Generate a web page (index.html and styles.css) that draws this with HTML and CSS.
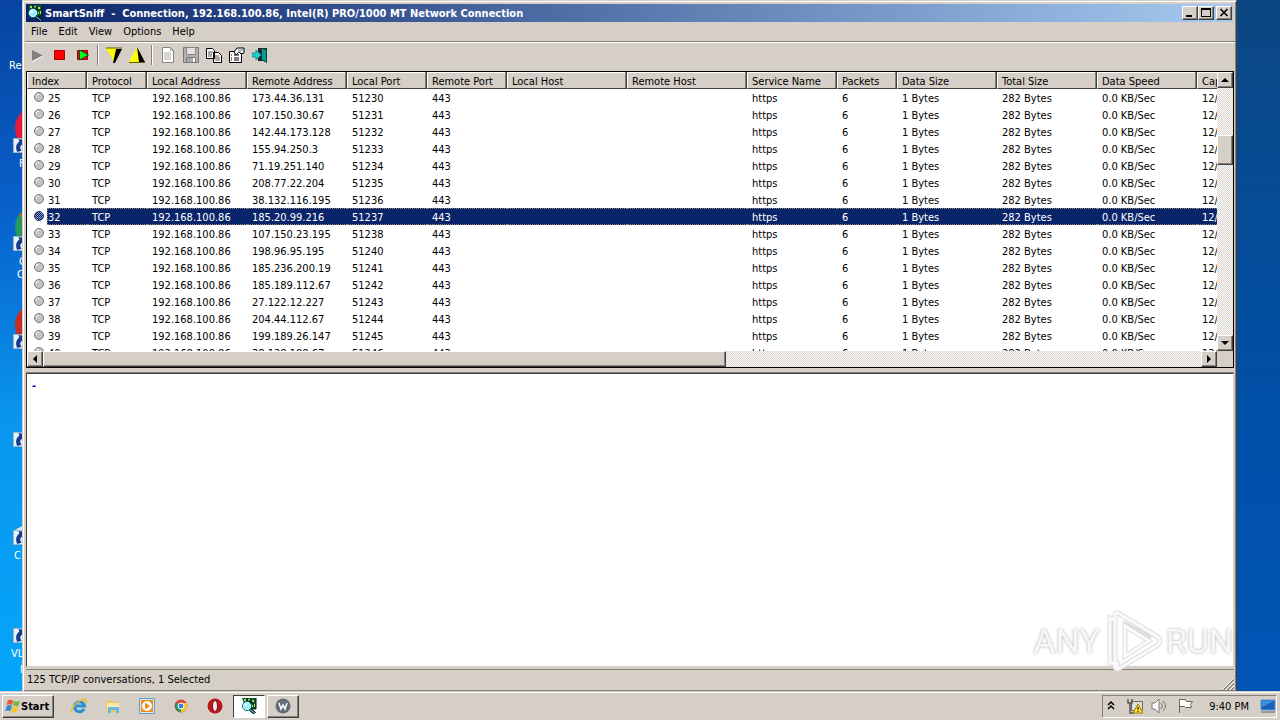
FILE: index.html
```
<!DOCTYPE html>
<html lang="en">
<head>
<meta charset="utf-8">
<title>SmartSniff</title>
<link rel="stylesheet" href="styles.css">
</head>
<body>
<svg width="0" height="0" class="defs" aria-hidden="true">
  <defs>
    <symbol id="sniff" viewBox="0 0 16 16">
      <path d="M1 0h14v11H5z" fill="#12552a"/><path d="M3 1h2v2H3zM7 1h2v2H7zM11 2h2v2h-2zM13 6h1v3h-1zM11 7h1v2h-1z" fill="#a6e36a"/><path d="M6 0v3h3v2h3M15 0v11h-4M10 1v4" fill="none" stroke="#001a08"/>
      <circle cx="6" cy="8" r="4.500" fill="#8ceefa" stroke="#0a5a66"/><circle cx="6" cy="8" r="3.500" fill="none" stroke="#d8ffff"/><path d="M4 6h2v2H4z" fill="#fff"/><path d="M9 11.500l5 4" stroke="#001a22" stroke-width="3"/><path d="M9 11.500l5 4" stroke="#7fe6f0"/>
    </symbol>
    <symbol id="shortcut" viewBox="0 0 14 14"><path d="M.5.5h13v13H.5z" fill="#e9f4fb" stroke="#9db5c4"/><path d="M12 2L5 1l1 2Q1 7 4 13l4-1Q5 8 9 6l1 3z" fill="#173a91"/></symbol>
    <symbol id="dot" viewBox="0 0 12 12"><circle cx="6" cy="6" r="4.500" fill="#c3c3c3" stroke="#777"/><path d="M3 6q0-3 3-3" fill="none" stroke="#f2f2f2"/></symbol>
    <pattern id="mesh" width="2" height="2" patternUnits="userSpaceOnUse"><path d="M0 0h2v2H0z" fill="#8d9bc0"/><path d="M0 0h1v1H0zM1 1h1v1H1z" fill="#0a246a"/></pattern>
    <symbol id="dot-sel" viewBox="0 0 12 12"><circle cx="6" cy="6" r="4.500" fill="url(#mesh)" stroke="#26397a"/></symbol>
  </defs>
</svg>

<main class="desktop">
  <div class="shortcuts">
    <span class="label recycle">Re</span>
    <svg class="pic firefox"><circle cx="22" cy="22" r="22" fill="#e8173c"/></svg><span class="label l2">F</span>
    <svg class="pic chrome"><circle cx="22" cy="22" r="22" fill="#25995b"/><path d="M4 10L22 0v22z" fill="#e34a2f"/></svg><span class="label l3">G</span><span class="label l4">C</span>
    <svg class="pic opera"><circle cx="22" cy="22" r="22" fill="#c72c27"/></svg>
    <svg class="pic paper"><path d="M0 8L14 0v10H0z" fill="#dce7ed"/></svg>
    <span class="label l5">C</span><span class="label l6">VL</span><span class="label l7">p</span>
    <svg class="arrow a1"><use href="#shortcut"/></svg><svg class="arrow a2"><use href="#shortcut"/></svg><svg class="arrow a3"><use href="#shortcut"/></svg><svg class="arrow a4"><use href="#shortcut"/></svg><svg class="arrow a5"><use href="#shortcut"/></svg><svg class="arrow a6"><use href="#shortcut"/></svg>
  </div>

  <section class="window">
    <header class="titlebar">
      <svg class="icon16"><use href="#sniff"/></svg>
      <h1>SmartSniff&nbsp; -&nbsp; Connection, 192.168.100.86, Intel(R) PRO/1000 MT Network Connection</h1>
      <div class="controls">
        <button class="raised" aria-label="Minimize"><svg viewBox="0 0 10 10"><path d="M1 7h6v2H1z"/></svg></button>
        <button class="raised" aria-label="Maximize"><svg viewBox="0 0 10 10"><path d="M0 0h10v9H0zM1 2v6h8V2z" fill-rule="evenodd"/></svg></button>
        <button class="raised close" aria-label="Close"><svg viewBox="0 0 10 10"><path d="M1.500 1l7 7M8.500 1l-7 7" stroke="#000" stroke-width="1.600"/></svg></button>
      </div>
    </header>
    <nav class="menu">
      <button>File</button><button>Edit</button><button>View</button><button>Options</button><button>Help</button>
    </nav>
    <div class="toolbar">
      <button aria-label="Start capture"><svg viewBox="0 0 16 16"><path d="M3 3l11 5.500L3 14z" fill="#808080"/><path d="M3 14.500L14 9" stroke="#fff"/></svg></button>
      <button aria-label="Stop capture"><svg viewBox="0 0 16 16"><path d="M2.500 3.500h10v9h-10z" fill="#f00" stroke="#a00"/></svg></button>
      <button aria-label="Restart capture"><svg viewBox="0 0 16 16"><path d="M2.500 3.500h10v9h-10z" fill="#f00" stroke="#900"/><path d="M4.500 3l9 5-9 5z" fill="#0f2" stroke="#052"/></svg></button>
      <i class="sep"></i>
      <button aria-label="Capture filter"><svg viewBox="0 0 16 16"><path d="M0 1h12L8 16 6 11z" fill="#ff0"/><path d="M10 2h6L9 16H7z"/><path d="M0 1h16" stroke="#665f00"/></svg></button>
      <button aria-label="Display filter"><svg viewBox="0 0 16 16"><path d="M8 0L0 15h12z" fill="#ff0"/><path d="M8 0l2 15h6z"/><path d="M0 15.500h16" stroke="#665f00"/></svg></button>
      <i class="sep"></i>
      <button aria-label="New"><svg viewBox="0 0 16 16"><path d="M2.500.5h8l3 3v12h-11z" fill="#fff" stroke="#858585"/><path d="M10.500.5v3h3M4 6h7M4 8h7M4 10h7M4 12h7" fill="none" stroke="#aaa"/></svg></button>
      <button aria-label="Save"><svg viewBox="0 0 16 16"><path d="M.5.5h15v15H.5z" fill="#b5b2ad" stroke="#777"/><path d="M3.500.5h9v7h-9z" fill="#e4e2df" stroke="#888"/><path d="M3.500 10.500h9v5h-9z" fill="#aaa" stroke="#777"/><path d="M10 11h2v4h-2z" fill="#fff"/></svg></button>
      <button aria-label="Copy"><svg viewBox="0 0 16 16"><path d="M.5 1.500h6l2 2v8h-8zM7.500 5.500h5l3 3v7h-8z" fill="#fff" stroke="#000"/><path d="M2 5h5M2 7h4M2 9h4M9 9h4M9 11h5M9 13h5" stroke="#555"/></svg></button>
      <button aria-label="Properties"><svg viewBox="0 0 16 16"><path d="M.5 4.500h12v11H.5z" fill="#fff" stroke="#000"/><path d="M2 8h1M5 8h5M2 11h1M5 11h5M2 13h1M5 13h5" stroke="#000"/><path d="M5 5l3-4h7v5l-3 1-2-2-3 3z" fill="#fff" stroke="#000"/><path d="M9 3h5M9 5h3" stroke="#777"/></svg></button>
      <button aria-label="Exit"><svg viewBox="0 0 16 16"><path d="M6 1h9v13H6z" fill="#222"/><path d="M9.500 1.500l5 1v13l-5-3z" fill="#149696" stroke="#044"/><path d="M0 6h4V3l5 5-5 5v-3H0z" fill="#19d0d0" stroke="#278b90"/></svg></button>
    </div>

    <section class="list">
      <div class="rows">
        <table>
          <colgroup><col class="w60"><col class="w60"><col class="w100"><col class="w100"><col class="w80"><col class="w80"><col class="w120"><col class="w120"><col class="w90"><col class="w60"><col class="w100"><col class="w100"><col class="w100"><col class="w100"></colgroup>
          <thead><tr><th>Index</th><th>Protocol</th><th>Local Address</th><th>Remote Address</th><th>Local Port</th><th>Remote Port</th><th>Local Host</th><th>Remote Host</th><th>Service Name</th><th>Packets</th><th>Data Size</th><th>Total Size</th><th>Data Speed</th><th>Cap</th></tr></thead>
          <tbody>
            <tr><td><svg><use href="#dot"/></svg><span>25</span></td><td>TCP</td><td>192.168.100.86</td><td>173.44.36.131</td><td>51230</td><td>443</td><td></td><td></td><td>https</td><td>6</td><td>1 Bytes</td><td>282 Bytes</td><td>0.0 KB/Sec</td><td>12/</td></tr>
            <tr><td><svg><use href="#dot"/></svg><span>26</span></td><td>TCP</td><td>192.168.100.86</td><td>107.150.30.67</td><td>51231</td><td>443</td><td></td><td></td><td>https</td><td>6</td><td>1 Bytes</td><td>282 Bytes</td><td>0.0 KB/Sec</td><td>12/</td></tr>
            <tr><td><svg><use href="#dot"/></svg><span>27</span></td><td>TCP</td><td>192.168.100.86</td><td>142.44.173.128</td><td>51232</td><td>443</td><td></td><td></td><td>https</td><td>6</td><td>1 Bytes</td><td>282 Bytes</td><td>0.0 KB/Sec</td><td>12/</td></tr>
            <tr><td><svg><use href="#dot"/></svg><span>28</span></td><td>TCP</td><td>192.168.100.86</td><td>155.94.250.3</td><td>51233</td><td>443</td><td></td><td></td><td>https</td><td>6</td><td>1 Bytes</td><td>282 Bytes</td><td>0.0 KB/Sec</td><td>12/</td></tr>
            <tr><td><svg><use href="#dot"/></svg><span>29</span></td><td>TCP</td><td>192.168.100.86</td><td>71.19.251.140</td><td>51234</td><td>443</td><td></td><td></td><td>https</td><td>6</td><td>1 Bytes</td><td>282 Bytes</td><td>0.0 KB/Sec</td><td>12/</td></tr>
            <tr><td><svg><use href="#dot"/></svg><span>30</span></td><td>TCP</td><td>192.168.100.86</td><td>208.77.22.204</td><td>51235</td><td>443</td><td></td><td></td><td>https</td><td>6</td><td>1 Bytes</td><td>282 Bytes</td><td>0.0 KB/Sec</td><td>12/</td></tr>
            <tr><td><svg><use href="#dot"/></svg><span>31</span></td><td>TCP</td><td>192.168.100.86</td><td>38.132.116.195</td><td>51236</td><td>443</td><td></td><td></td><td>https</td><td>6</td><td>1 Bytes</td><td>282 Bytes</td><td>0.0 KB/Sec</td><td>12/</td></tr>
            <tr class="selected"><td><svg><use href="#dot-sel"/></svg><span>32</span></td><td>TCP</td><td>192.168.100.86</td><td>185.20.99.216</td><td>51237</td><td>443</td><td></td><td></td><td>https</td><td>6</td><td>1 Bytes</td><td>282 Bytes</td><td>0.0 KB/Sec</td><td>12/</td></tr>
            <tr><td><svg><use href="#dot"/></svg><span>33</span></td><td>TCP</td><td>192.168.100.86</td><td>107.150.23.195</td><td>51238</td><td>443</td><td></td><td></td><td>https</td><td>6</td><td>1 Bytes</td><td>282 Bytes</td><td>0.0 KB/Sec</td><td>12/</td></tr>
            <tr><td><svg><use href="#dot"/></svg><span>34</span></td><td>TCP</td><td>192.168.100.86</td><td>198.96.95.195</td><td>51240</td><td>443</td><td></td><td></td><td>https</td><td>6</td><td>1 Bytes</td><td>282 Bytes</td><td>0.0 KB/Sec</td><td>12/</td></tr>
            <tr><td><svg><use href="#dot"/></svg><span>35</span></td><td>TCP</td><td>192.168.100.86</td><td>185.236.200.19</td><td>51241</td><td>443</td><td></td><td></td><td>https</td><td>6</td><td>1 Bytes</td><td>282 Bytes</td><td>0.0 KB/Sec</td><td>12/</td></tr>
            <tr><td><svg><use href="#dot"/></svg><span>36</span></td><td>TCP</td><td>192.168.100.86</td><td>185.189.112.67</td><td>51242</td><td>443</td><td></td><td></td><td>https</td><td>6</td><td>1 Bytes</td><td>282 Bytes</td><td>0.0 KB/Sec</td><td>12/</td></tr>
            <tr><td><svg><use href="#dot"/></svg><span>37</span></td><td>TCP</td><td>192.168.100.86</td><td>27.122.12.227</td><td>51243</td><td>443</td><td></td><td></td><td>https</td><td>6</td><td>1 Bytes</td><td>282 Bytes</td><td>0.0 KB/Sec</td><td>12/</td></tr>
            <tr><td><svg><use href="#dot"/></svg><span>38</span></td><td>TCP</td><td>192.168.100.86</td><td>204.44.112.67</td><td>51244</td><td>443</td><td></td><td></td><td>https</td><td>6</td><td>1 Bytes</td><td>282 Bytes</td><td>0.0 KB/Sec</td><td>12/</td></tr>
            <tr><td><svg><use href="#dot"/></svg><span>39</span></td><td>TCP</td><td>192.168.100.86</td><td>199.189.26.147</td><td>51245</td><td>443</td><td></td><td></td><td>https</td><td>6</td><td>1 Bytes</td><td>282 Bytes</td><td>0.0 KB/Sec</td><td>12/</td></tr>
            <tr><td><svg><use href="#dot"/></svg><span>40</span></td><td>TCP</td><td>192.168.100.86</td><td>38.128.188.67</td><td>51246</td><td>443</td><td></td><td></td><td>https</td><td>6</td><td>1 Bytes</td><td>282 Bytes</td><td>0.0 KB/Sec</td><td>12/</td></tr>
          </tbody>
        </table>
      </div>
      <div class="scroll vertical">
        <button class="raised" aria-label="Scroll up"><svg viewBox="0 0 8 8"><path d="M0 6h8L4 2z"/></svg></button>
        <div class="track"><div class="thumb raised"></div></div>
        <button class="raised" aria-label="Scroll down"><svg viewBox="0 0 8 8"><path d="M0 2h8L4 6z"/></svg></button>
      </div>
      <div class="scroll horizontal">
        <button class="raised" aria-label="Scroll left"><svg viewBox="0 0 8 8"><path d="M6 0v8L2 4z"/></svg></button>
        <div class="track"><div class="thumb raised"></div></div>
        <button class="raised" aria-label="Scroll right"><svg viewBox="0 0 8 8"><path d="M2 0v8l4-4z"/></svg></button>
      </div>
      <div class="corner"></div>
    </section>

    <section class="stream">-</section>
    <footer class="status"><span>125 TCP/IP conversations, 1 Selected</span>
      <svg viewBox="0 0 12 12"><path d="M1 12L12 1M5 12l7-7M9 12l3-3" stroke="#777" stroke-width="1.500"/><path d="M0 12L12 0M4 12l8-8M8 12l4-4" stroke="#fff"/></svg></footer>
    <div class="watermark"><span>ANY</span>
      <svg viewBox="0 0 60 64"><path d="M12 11L7 9V54h7v6M15 4l40 24q4 4 0 8L15 60q-3 0-3-3V7q0-4 3-3zM22 17v30l24-15zM20 14l28 15" fill="none" stroke="#ddd" stroke-width="5"/><path d="M12 11L7 9V54h7v6M15 4l40 24q4 4 0 8L15 60q-3 0-3-3V7q0-4 3-3zM22 17v30l24-15z" fill="none" stroke="#fafafa" stroke-width="3"/></svg>
      <span>RUN</span></div>
  </section>
</main>

<footer class="taskbar">
  <button class="start raised"><svg viewBox="0 0 18 18"><path d="M3 3q3-2 6 0L8 8Q5 6 2 8z" fill="#e9552c"/><path d="M10 3q3 2 7 0l-2 6q-3 1-6-1z" fill="#73b843"/><path d="M2 9q3-2 6 0l-2 6q-3-2-6 0z" fill="#338bd5"/><path d="M9 9q3 2 6 1l-2 6q-3 1-6-1z" fill="#f7c42b"/></svg><b>Start</b></button>
  <div class="launch">
    <button aria-label="Internet Explorer"><svg viewBox="0 0 16 16"><path d="M13 11a5 5 0 1 1 .5-3H4" fill="none" stroke="#2591d8" stroke-width="3"/><path d="M1 15C-1 10 10-1 15 2q1 1-1 4" fill="none" stroke="#e8bd34" stroke-width="1.500"/></svg></button>
    <button aria-label="Explorer"><svg viewBox="0 0 16 16"><path d="M1 2h5l1 2h7v10H1z" fill="#e8c96d"/><path d="M2 5h12v7H2z" fill="#fae9a8"/><path d="M3 15V9h11v6h-3v-3H6v3z" fill="#68b8e1"/></svg></button>
    <button aria-label="Media Player"><svg viewBox="0 0 16 16"><path d="M.5.5h15v15H.5z" fill="#d6ebf5" stroke="#5b9fc9"/><path d="M2 2h12v12H2z" fill="#f18b13"/><circle cx="8" cy="8" r="5" fill="#fff"/><path d="M6 4.500l5 3.500-5 3.500z" fill="#f18b13"/></svg></button>
    <button aria-label="Chrome"><svg viewBox="0 0 16 16"><circle cx="8" cy="8" r="6.500" fill="#e24234"/><path d="M8 8L2.500 4.500Q0 12 8 14.500z" fill="#239957"/><path d="M8 8V5h6q3 7-6 9.500z" fill="#f4c52d"/><circle cx="8" cy="8" r="3" fill="#3984df" stroke="#fff"/></svg></button>
    <button aria-label="Opera"><svg viewBox="0 0 16 16"><circle cx="8" cy="8" r="7.500" fill="#b9161d"/><ellipse cx="8" cy="8" rx="2.500" ry="5.500" fill="#eee" stroke="#7c0c10"/></svg></button>
    <button class="task active" aria-label="SmartSniff"><svg><use href="#sniff"/></svg></button>
    <button class="task raised" aria-label="W application"><svg viewBox="0 0 16 16"><circle cx="8" cy="8" r="7.500" fill="#626b78"/><path d="M4 5l2 6 2-4 2 4 2-6" fill="none" stroke="#fff" stroke-width="1.500"/></svg></button>
  </div>
  <div class="tray">
    <svg viewBox="0 0 16 16"><path d="M5 7l3-3 3 3M5 11l3-3 3 3" fill="none" stroke="#000" stroke-width="1.500"/></svg>
    <svg viewBox="0 0 16 16"><path d="M4.500 3.500h11v9h-11z" fill="#ddd" stroke="#666"/><path d="M1 1v4h4V1M3 5v10h4" fill="none" stroke="#555" stroke-width="1.500"/><path d="M11 6l5 9H6z" fill="#ffdc20" stroke="#9c8612"/><path d="M11 9v3M11 13v1" stroke="#000"/></svg>
    <svg class="sound" viewBox="0 0 18 16"><path d="M1 5h3l4-4v14l-4-4H1z" fill="#fff" stroke="#777"/><path d="M10 5q3 3 0 6M12 3q5 5 0 10" fill="none" stroke="#777"/></svg>
    <svg viewBox="0 0 16 16"><path d="M2.500 15V1.500h6l1 2h6l-2 3 1 3h-6l-1-1h-5" fill="#fff" stroke="#666"/></svg>
    <time>9:40 PM</time>
    <svg viewBox="0 0 16 16"><path d="M1 2h14v10H1z" fill="#1960b9" stroke="#5a98d6"/><path d="M2 3h12L2 9z" fill="#3c8fe0"/><path d="M1 14h14" stroke="#667"/></svg>
  </div>
</footer>
</body>
</html>
```
FILE: styles.css
```
* { box-sizing: border-box; }
body {
  margin: 0;
  height: 100vh;
  display: flex;
  flex-direction: column;
  overflow: hidden;
  font: 11px/13px "DejaVu Sans Condensed", "DejaVu Sans", sans-serif;
  color: #000;
  background: #d5cfc7;
}
button { font: inherit; color: inherit; padding: 0; border: 0; background: none; }
svg { display: block; flex: none; }
.defs { position: absolute; }
.raised {
  background: #d5cfc7;
  border: 1px solid;
  border-color: #fff #404040 #404040 #fff;
  box-shadow: inset -1px -1px #868078;
}

.desktop {
  position: relative;
  flex: 1;
  min-height: 0;
  display: flex;
  padding: 0 43px 0 22px;
  background:
    linear-gradient(#0c4681, #064b93 25%, #0050a8 60%, #0055b5) right / 43px 100% no-repeat,
    linear-gradient(#0644a0, #0860ca 30%, #0995ed 60%, #04a6fa);
}
.shortcuts { position: absolute; left: 0; top: 0; bottom: 0; width: 22px; overflow: hidden; color: #fff; }
.label { position: absolute; left: 14px; white-space: nowrap; }
.recycle { left: 9px; top: 59px; }
.l2 { left: 19px; top: 157px; }
.l3 { left: 19px; top: 255px; }
.l4 { left: 17px; top: 268px; }
.l5 { top: 549px; }
.l6 { left: 11px; top: 647px; }
.l7 { left: 20px; top: 661px; }
.pic { position: absolute; left: 15px; width: 44px; height: 44px; }
.firefox { top: 106px; }
.chrome { top: 205px; }
.opera { top: 303px; }
.paper { top: 522px; }
.arrow { position: absolute; left: 13px; width: 15px; height: 15px; }
.a1 { top: 138px; }
.a2 { top: 236px; }
.a3 { top: 334px; }
.a4 { top: 432px; }
.a5 { top: 530px; }
.a6 { top: 628px; }

.window {
  position: relative;
  flex: 1;
  min-width: 0;
  display: flex;
  flex-direction: column;
  padding: 2px 1px 1px 2px;
  background: #d5cfc7;
  border: 1px solid;
  border-color: #d5cfc7 #404040 #404040 #d5cfc7;
  box-shadow: inset 1px 1px #fff, inset -1px -1px #868078;
}
.titlebar {
  display: flex;
  align-items: center;
  height: 18px;
  margin: 1px 2px 0 1px;
  padding: 0 1px;
  gap: 2px;
  color: #fff;
  background: linear-gradient(90deg, #0a246a, #a6caf0);
}
.titlebar h1 { flex: 1; margin: 0; font-size: 11px; white-space: nowrap; }
.icon16 { width: 16px; height: 16px; }
.controls { display: flex; }
.controls button { display: flex; align-items: center; justify-content: center; width: 16px; height: 14px; }
.controls svg { width: 10px; height: 10px; }
.controls .close { margin-left: 2px; }
.menu { display: flex; gap: 11px; height: 20px; padding: 0 6px; border-bottom: 1px solid #868078; }
.toolbar { display: flex; align-items: center; height: 29px; padding: 0 0 5px; border-top: 1px solid #fff; }
.toolbar button { width: 23px; height: 22px; display: flex; align-items: center; justify-content: center; }
.toolbar svg { width: 16px; height: 16px; }
.sep { width: 2px; height: 20px; margin: 0 3px; border-left: 1px solid #868078; border-right: 1px solid #fff; }

.list {
  flex: 295 1 0;
  min-height: 0;
  display: grid;
  grid-template: minmax(0, 1fr) 16px / minmax(0, 1fr) 16px;
  margin: 0 1px;
  border: 1px solid #000;
  background: #fff;
}
.rows { overflow: hidden; }
table { width: 1270px; table-layout: fixed; border-collapse: separate; border-spacing: 0; }
.w60 { width: 60px; }
.w80 { width: 80px; }
.w90 { width: 90px; }
.w100 { width: 100px; }
.w120 { width: 120px; }
th, td { height: 17px; padding: 2px 5px 0; text-align: left; font-weight: normal; white-space: nowrap; }
th {
  background: #d5cfc7;
  border: solid;
  border-width: 0 1px 1px;
  border-color: #fff #404040 #404040 #fff;
  box-shadow: inset -1px 0 #868078, inset 0 1px #fff;
  padding: 2px 4px 0;
}
td:first-child { display: flex; align-items: flex-start; gap: 2px; padding: 0 0 0 6px; }
td svg { width: 12px; height: 12px; margin-top: 2px; }
td span { flex: 1; line-height: 15px; padding: 2px 0 0 1px; }
.selected td { color: #fff; background: #0a246a; border: dotted #8f8a72; border-width: 1px 0; }
.selected td:first-child { background: none; border: 0; }
.selected td span { background: #0a246a; border: dotted #8f8a72; border-width: 1px 0 1px 1px; padding-left: 0; line-height: 13px; }

.scroll { display: flex; background: repeating-conic-gradient(#fff 0 25%, #d5cfc7 0 50%) 0 0 / 2px 2px; }
.scroll button { flex: none; width: 16px; height: 16px; display: flex; align-items: center; justify-content: center; }
.scroll svg { width: 8px; height: 8px; }
.track { flex: 1; min-width: 0; }
.vertical { flex-direction: column; }
.vertical .track { padding-top: 47px; }
.vertical .thumb { height: 30px; }
.horizontal .thumb { width: 59%; height: 16px; }
.corner { background: #d5cfc7; }
.stream {
  flex: 282 1 0;
  min-height: 0;
  margin: 5px 1px 2px;
  padding: 5px;
  color: #00c;
  font-weight: bold;
  background: #fff;
  border: 1px solid;
  border-color: #404040 #d5cfc7 #d5cfc7 #404040;
  box-shadow: 0 -1px #868078;
}
.status { display: flex; justify-content: space-between; align-items: center; height: 21px; margin: 0 1px; padding-left: 1px; border-top: 1px solid #868078; }
.status span { padding-bottom: 2px; }
.status svg { width: 12px; height: 12px; align-self: flex-end; }
.watermark {
  position: absolute;
  right: 3px;
  bottom: 18px;
  display: flex;
  align-items: center;
  gap: 3px;
  font: 34px/60px Roboto, sans-serif;
  color: #f7f7f7;
  text-shadow: 0 0 3px #aaa;
}
.watermark svg { width: 60px; height: 64px; }

.taskbar { display: flex; align-items: center; height: 28px; padding: 1px 3px 2px 2px; border-top: 1px solid #fff; background: #d5cfc7; box-shadow: 0 -1px #d5cfc7; z-index: 1; }
.start { display: flex; align-items: center; gap: 0; width: 52px; height: 23px; padding: 0 2px; }
.start b { font-size: 11px; }
.start svg { width: 16px; height: 18px; }
.launch { display: flex; align-items: center; flex: 1; padding-left: 8px; }
.launch button { width: 34px; height: 23px; display: flex; align-items: center; justify-content: center; }
.launch svg { width: 16px; height: 16px; }
.launch .task { width: 32px; margin-left: 2px; }
.launch .task.active { margin-left: 1px; }
.launch .active { background: #fff; border: 1px solid; border-color: #404040 #fff #fff #404040; }
.tray { display: flex; align-items: center; gap: 8px; height: 23px; padding: 0; border: 1px solid; border-color: #868078 #fff #fff #868078; }
.tray svg { width: 16px; height: 16px; }
.tray .sound { width: 18px; }
.tray time { padding: 0 3px 0 8px; }
```
